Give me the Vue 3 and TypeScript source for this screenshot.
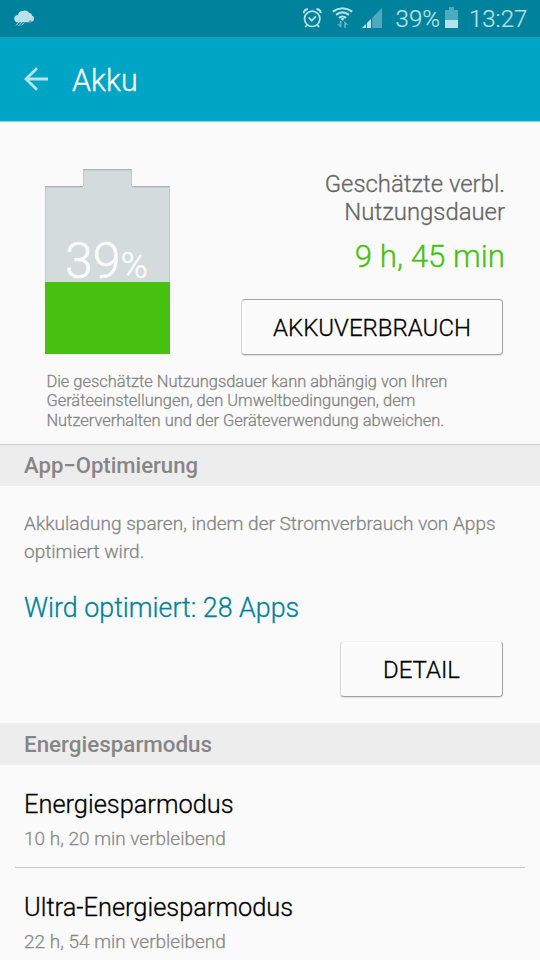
<script setup lang="ts">
interface Mode {
  title: string
  remaining: string
}

const level = 39
const note: string[] = [
  'Die geschätzte Nutzungsdauer kann abhängig von Ihren',
  'Geräteeinstellungen, den Umweltbedingungen, dem',
  'Nutzerverhalten und der Geräteverwendung abweichen.',
]
const modes: Mode[] = [
  { title: 'Energiesparmodus', remaining: '10 h, 20 min verbleibend' },
  { title: 'Ultra-Energiesparmodus', remaining: '22 h, 54 min verbleibend' },
]
</script>

<template>
  <div class="screen">
    <div class="status">
      <svg class="cloud" width="22" height="18" viewBox="0 0 22 18">
        <path d="M4.5 12.5C1.5 12.5 0 11 0.2 8.3C0.3 6.3 2 5.2 4 5C4.4 2 6.5 0.8 8.5 1C9.8 0 13.8 0 15 2.8C17 3.1 18 4.4 18 5.7C20 6.2 20.3 8.2 20 9.2C19.5 11.3 18 11.8 16.5 11.6L13 12.3L10 12Z" fill="#b9e1e9" />
        <path d="M13.5 12.3L16.3 10L18.3 11.5L16 12.8Z" fill="#8f9c9f" />
        <path d="M5 12L2 15.5M8 12L4.5 16M11 11.5L7.5 15.5" stroke="#a3d4de" stroke-width="1" fill="none" />
      </svg>
      <svg class="alarm" width="20" height="21" viewBox="0 0 20 21" fill="none" stroke="#b8e2ea">
        <circle cx="9.2" cy="10.8" r="7.7" stroke-width="1.7" />
        <path d="M5.7 9.5L8.7 12.7L12.9 8.3" stroke-width="1.7" />
        <path d="M.6 5.2Q1 1.7 4.9 1.1M13.5 1.1Q17.4 1.7 17.8 5.2" stroke-width="2" />
        <path d="M4.3 16.8L2.2 19M14.1 16.8L16.2 19" stroke-width="1.8" />
      </svg>
      <svg class="wifi" width="21" height="22" viewBox="0 0 21 22" fill="none">
        <path d="M.8 4.7Q10.5 -2.3 20.2 4.7M4 7.9Q10.5 3 17 7.9M7 10.8Q10.5 8.2 14 10.8" stroke="#b8e2ea" stroke-width="2.1" />
        <path d="M8.4 11.6L10.5 14L12.6 11.6Q10.5 10.2 8.4 11.6Z" fill="#b8e2ea" />
        <path d="M7.8 14H9.4V21L5 17.2H7.8ZM12.2 21V14L16.6 17.7H13.8V21Z" fill="#5fb6c8" />
      </svg>
      <svg class="signal" width="20" height="20" viewBox="0 0 20 20">
        <path d="M0 20L20 0V20Z" fill="#4dabbe" />
        <path d="M0 20L4 16V20ZM5 20V15L9 11V20Z" fill="#b8e2ea" />
        <path d="M4 15V20H5V14ZM9 10V20H10.2V9Z" fill="#00829c" />
      </svg>
      <span class="pct">{{ level }}%</span>
      <svg class="mini" width="13" height="21" viewBox="0 0 13 21">
        <path d="M0 3H4V0H9V3H13V13H0Z" fill="#4dabbe" />
        <path d="M0 13H13V21H0Z" fill="#b8e2ea" />
      </svg>
      <span class="clock">13:27</span>
    </div>

    <header class="bar">
      <svg width="25" height="24" viewBox="0 0 25 24" fill="none" stroke="#b4e3ed" stroke-width="2.8">
        <path d="M24 12H2M13 1.2L2 12L13 22.8" />
      </svg>
      <h1>Akku</h1>
    </header>

    <section class="hero">
      <div class="overview">
        <div class="battery">
          <svg width="125" height="185" viewBox="0 0 125 185">
            <path d="M0 17H38V0H87V17H125V185H0Z" fill="#d3dbdd" />
            <path d="M.5 113V17M38.5 17V0M86.5 0V17M124.5 17V113" stroke="#c3c9ca" fill="none" />
            <path d="M0 17.5H38M38 .5H87M87 17.5H125" stroke="#b2b4b4" fill="none" />
            <path d="M1 18.5H38M39 1.5H86M87 18.5H124" stroke="#c6cbcc" fill="none" />
            <path d="M0 113H125V185H0Z" fill="#46c110" />
          </svg>
          <div class="level"><span class="num">{{ level }}</span><span class="sign">%</span></div>
        </div>
        <div class="estimate">
          <p class="label">Geschätzte verbl.<br>Nutzungsdauer</p>
          <p class="time">9 h, 45 min</p>
          <button class="btn usage" type="button">AKKUVERBRAUCH</button>
        </div>
      </div>
      <p class="note"><span v-for="line in note" :key="line">{{ line }}</span></p>
    </section>

    <h2 class="section first">App−Optimierung</h2>
    <section class="optimise">
      <p class="para">Akkuladung sparen, indem der Stromverbrauch von Apps<br>optimiert wird.</p>
      <p class="apps">Wird optimiert: 28 Apps</p>
      <button class="btn detail" type="button">DETAIL</button>
    </section>

    <h2 class="section second">Energiesparmodus</h2>
    <ul class="modes">
      <li v-for="mode in modes" :key="mode.title">
        <div class="title">{{ mode.title }}</div>
        <div class="sub">{{ mode.remaining }}</div>
      </li>
    </ul>
  </div>
</template>

<style>
body {
  margin: 0;
  overflow: hidden;
}
</style>

<style scoped>
* {
  box-sizing: border-box;
}

.screen {
  width: 540px;
  height: 960px;
  overflow: hidden;
  background: #fafafa;
  color: #000;
  font-family: Roboto, "Liberation Sans", sans-serif;
  font-weight: 300;
  -webkit-text-stroke: .3px currentColor;
}

h1, h2, p, ul {
  margin: 0;
  padding: 0;
  font-weight: inherit;
}

svg {
  display: block;
  flex: none;
}

.status {
  display: flex;
  height: 37px;
  padding: 0 14px;
  background: #00829c;
  color: #bde3ea;
  font-size: 24px;
  line-height: 38px;
  white-space: nowrap;
  -webkit-text-stroke-width: .2px;
}

.cloud { margin-top: 10px; }
.alarm { margin: 8px 0 0 267px; }
.wifi { margin: 7px 0 0 9px; }
.signal { margin: 8px 0 0 9px; }
.pct { width: 44px; margin-left: 13.6px; }
.mini { margin: 7px 0 0 5.4px; }
.clock { margin-left: 11px; }

.bar {
  display: flex;
  align-items: center;
  height: 85px;
  padding: 0 24px;
  gap: 23px;
  background: #00a5c5;
  border-bottom: 1px solid #8ccfdd;
}

.bar h1 {
  color: #fff;
  font-size: 30.5px;
  line-height: 36px;
  padding-top: 4px;
}

.hero {
  height: 322px;
  padding: 47px 35px 0 45px;
}

.overview {
  display: flex;
  justify-content: space-between;
}

.battery {
  position: relative;
  width: 125px;
}

.level {
  position: absolute;
  left: 20px;
  top: 62px;
  display: flex;
  align-items: baseline;
  color: #fafafa;
  line-height: 60px;
  -webkit-text-stroke-width: .6px;
}

.num { font-size: 50px; }
.sign { font-size: 37px; }

.estimate {
  display: flex;
  flex-direction: column;
  align-items: flex-end;
}

.label {
  padding-top: 1px;
  color: #666;
  font-size: 23.9px;
  line-height: 28px;
  text-align: right;
  white-space: nowrap;
}

.time {
  margin-top: 11px;
  color: #46c110;
  font-size: 31.3px;
  line-height: 40px;
}

.btn {
  display: flex;
  align-items: center;
  justify-content: center;
  height: 56px;
  padding: 1px 0 0;
  border: 1px solid #a4a6a6;
  border-left-color: #dadada;
  border-radius: 4px;
  background: #fbfbfb;
  box-shadow: 0 1px 1px #ddd;
  color: #000;
  font-family: inherit;
  font-size: 24px;
  font-weight: inherit;
  line-height: 28px;
}

.usage {
  width: 262px;
  margin: 22px 2px 0 0;
}

.note {
  display: flex;
  flex-direction: column;
  margin: 17px 0 0 1.4px;
  color: #858585;
  font-size: 16.45px;
  line-height: 19.4px;
  white-space: nowrap;
}

.section {
  height: 42px;
  padding-left: 24px;
  background: #ededed;
  color: #868686;
  font-size: 22.1px;
  font-weight: 500;
  line-height: 40px;
  -webkit-text-stroke-width: 0;
}

.section.first {
  border-top: 1px solid #cdcdcd;
}

.section.second {
  font-size: 22.4px;
  line-height: 43px;
}

.optimise {
  display: flex;
  flex-direction: column;
  align-items: flex-start;
  height: 237px;
  padding: 24px 37px 0 24px;
}

.para {
  color: #868686;
  font-size: 19.05px;
  line-height: 28px;
  white-space: nowrap;
}

.apps {
  margin-top: 26px;
  color: #00829c;
  font-size: 26.8px;
  line-height: 32px;
}

.detail {
  align-self: flex-end;
  width: 163px;
  margin-top: 17px;
  border-top-color: #f2f2f2;
}

.modes {
  list-style: none;
}

.modes li {
  height: 103px;
  margin: 0 15px;
  padding: 23px 9px 0;
  border-bottom: 1px solid #c9c9c9;
  white-space: nowrap;
}

.title {
  font-size: 25.4px;
  line-height: 32px;
}

.sub {
  margin-top: 5px;
  color: #8b8b8b;
  font-size: 19px;
  line-height: 28px;
}
</style>
